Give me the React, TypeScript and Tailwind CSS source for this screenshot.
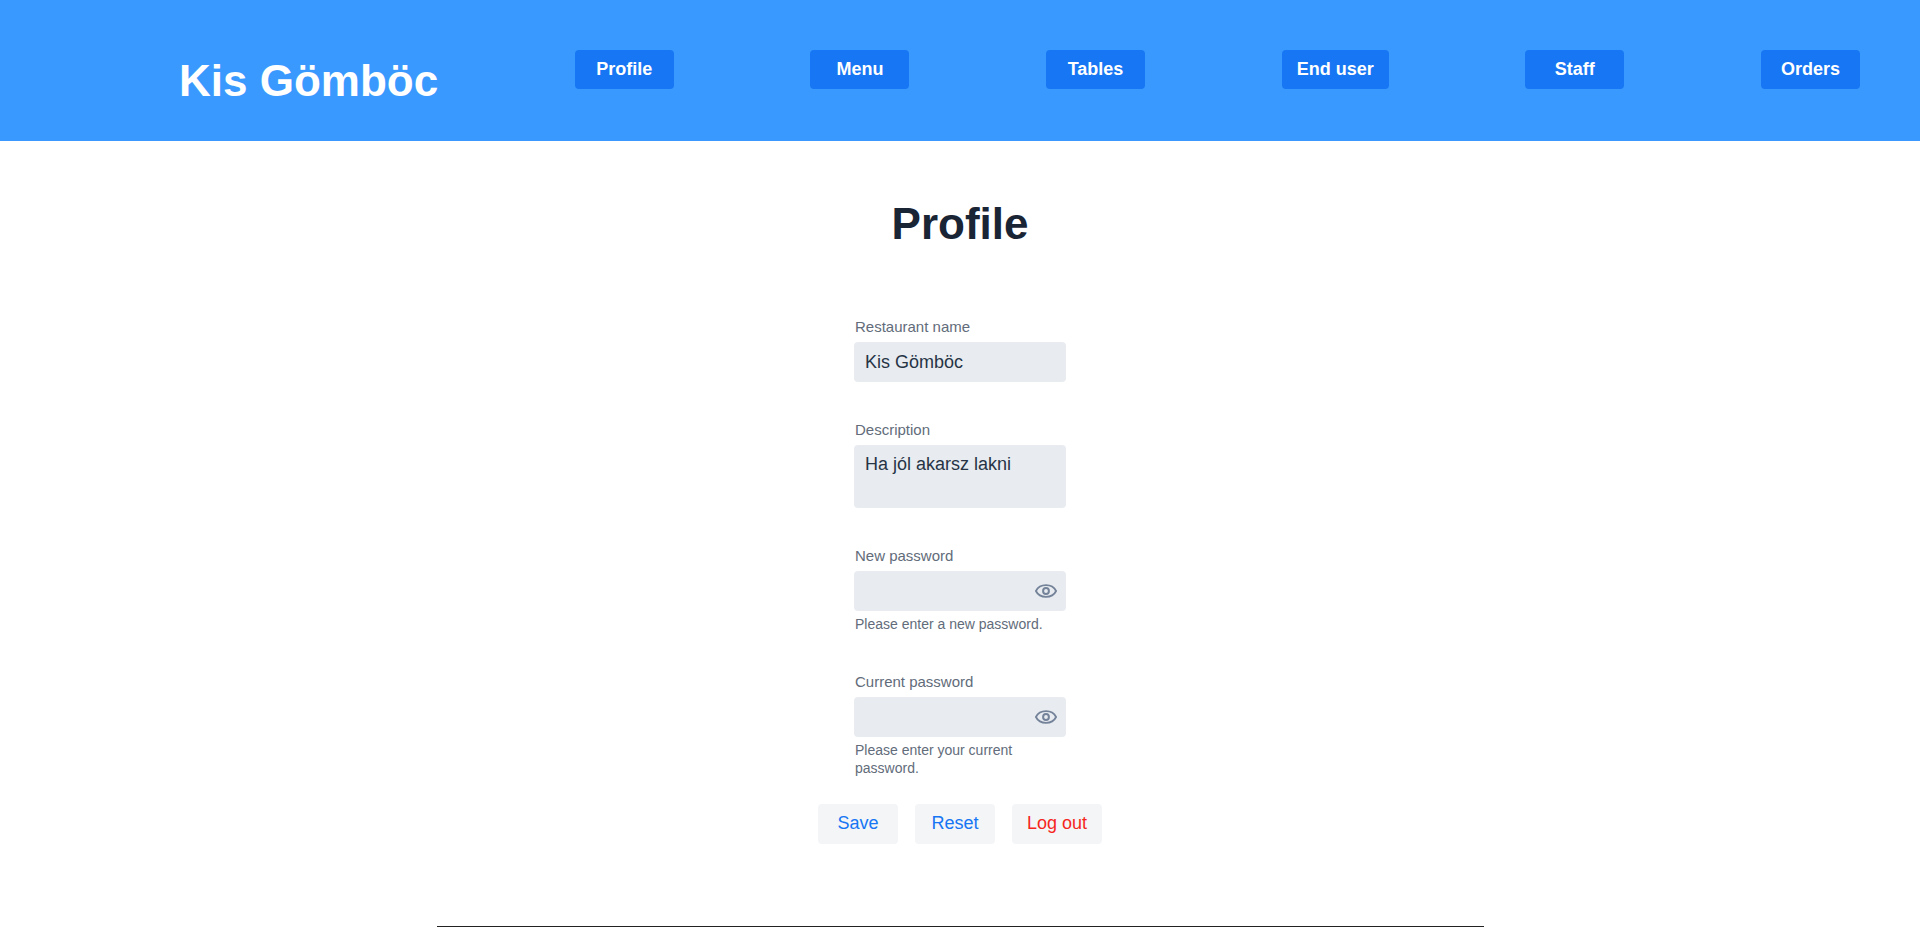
import { useState, type ReactNode } from "react";

const sections = ["Profile", "Menu", "Tables", "End user", "Staff", "Orders"];

const fieldClass =
  "block w-full rounded bg-[#e8ebef] px-[11px] text-lg leading-6 text-[#263446] outline-none focus:ring-2 focus:ring-[#1676f3]/50";

const actionClass = "h-10 min-w-20 rounded bg-[#f3f5f7] px-[15px] pb-0.5 text-lg leading-6";

function EyeIcon() {
  return (
    <svg viewBox="0 0 22 14" width="22" height="14" fill="none" stroke="currentColor" aria-hidden="true">
      <path d="M.9 7C2.600 3.600 6.800 1.100 11 1.100S19.400 3.600 21.100 7C19.400 10.400 15.200 12.900 11 12.900S2.600 10.400 .9 7Z" strokeWidth="1.800" />
      <circle cx="11" cy="7" r="2.900" strokeWidth="2" />
    </svg>
  );
}

function Field({ id, label, helper, children }: { id: string; label: string; helper?: string; children: ReactNode }) {
  return (
    <div className="w-full">
      <label htmlFor={id} className="block px-px pb-1 text-[15px] leading-[22px] text-[#626c7a]">
        {label}
      </label>
      {children}
      {helper && (
        <p id={`${id}-helper`} className="px-px pt-1 pb-px text-sm leading-[18px] text-[#626c7a]">
          {helper}
        </p>
      )}
    </div>
  );
}

function PasswordField({ id, label, helper }: { id: string; label: string; helper: string }) {
  const [visible, setVisible] = useState(false);
  return (
    <Field id={id} label={label} helper={helper}>
      <div className="relative">
        <input
          id={id}
          type={visible ? "text" : "password"}
          aria-describedby={`${id}-helper`}
          className={`${fieldClass} h-10`}
        />
        <button
          type="button"
          aria-label="Show password"
          aria-pressed={visible}
          onClick={() => setVisible(!visible)}
          className="absolute inset-y-0 right-0 flex w-10 items-center justify-center pb-px text-[#74839a]"
        >
          <EyeIcon />
        </button>
      </div>
    </Field>
  );
}

export default function App() {
  return (
    <div className="bg-white font-['Liberation_Sans',Arial,sans-serif]">
      <header className="flex items-start justify-between bg-[#3a99ff] pr-[60px] pb-[34px] pl-[179px]">
        <h1 className="pt-[54px] text-[44px] leading-[53px] font-bold text-white">Kis Gömböc</h1>
        {sections.map((name) => (
          <button
            key={name}
            type="button"
            className="mt-[50px] h-[39px] min-w-[99px] rounded bg-[#1676f3] px-[15px] pb-0.5 text-lg leading-6 font-bold text-white"
          >
            {name}
          </button>
        ))}
      </header>

      <main className="flex flex-col items-center">
        <h2 className="pt-[56px] text-[44px] leading-[53px] font-bold text-[#192434]">Profile</h2>

        <form className="flex flex-col items-center pt-[66px]" onSubmit={(e) => e.preventDefault()}>
          <div className="flex w-[212px] flex-col gap-[37px]">
            <Field id="name" label="Restaurant name">
              <input id="name" type="text" defaultValue="Kis Gömböc" className={`${fieldClass} h-10`} />
            </Field>
            <Field id="description" label="Description">
              <textarea
                id="description"
                defaultValue="Ha jól akarsz lakni"
                className={`${fieldClass} h-[63px] resize-none py-[7px]`}
              />
            </Field>
            <PasswordField id="new-password" label="New password" helper="Please enter a new password." />
            <PasswordField
              id="current-password"
              label="Current password"
              helper="Please enter your current password."
            />
          </div>

          <div className="flex gap-[17px] pt-[26px]">
            <button type="submit" className={`${actionClass} text-[#1676f3]`}>
              Save
            </button>
            <button type="reset" className={`${actionClass} text-[#1676f3]`}>
              Reset
            </button>
            <button type="button" className={`${actionClass} text-[#f5261d]`}>
              Log out
            </button>
          </div>
        </form>

        <hr className="mt-[82px] w-[1047px] max-w-full border-t border-[#222222]" />
      </main>
    </div>
  );
}
